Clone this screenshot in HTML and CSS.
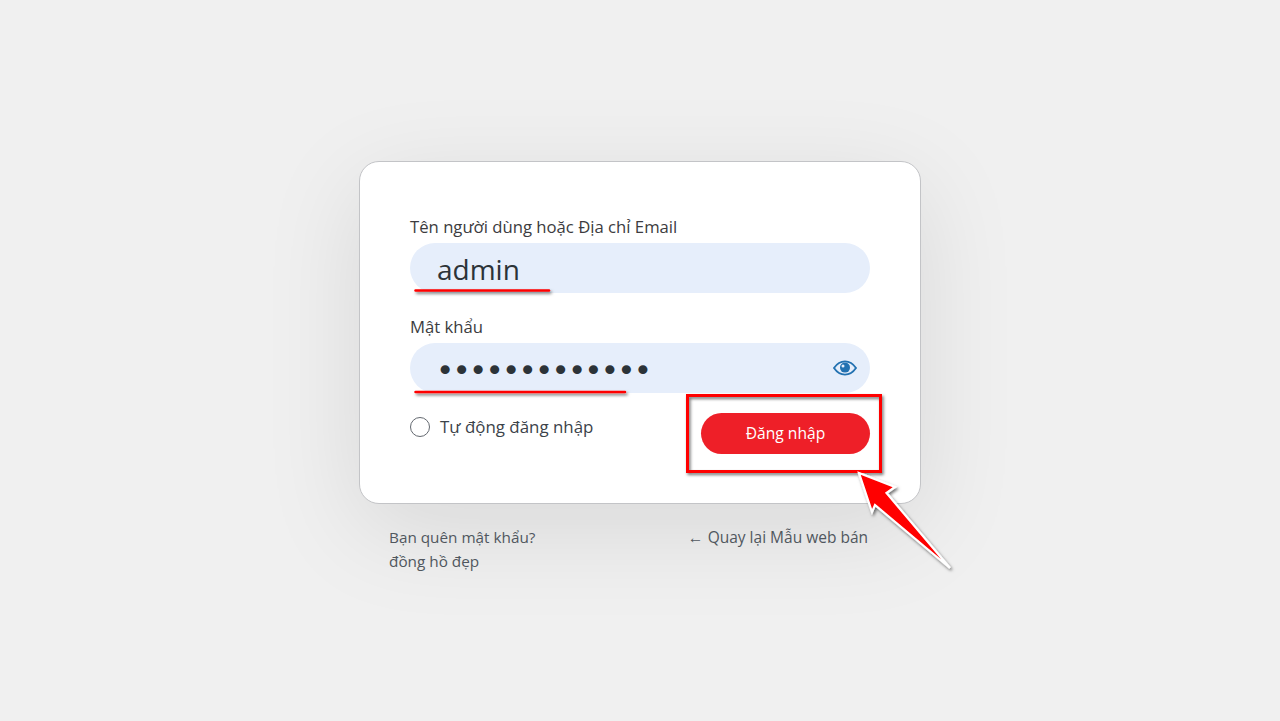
FILE: index.html
```html
<!DOCTYPE html>
<html lang="vi">
<head>
  <meta charset="UTF-8">
  <title>Đăng nhập</title>
  <link rel="stylesheet" href="styles.css">
</head>
<body>
<div class="login">
  <form class="login-form">
    <label class="field-label">Tên người dùng hoặc Địa chỉ Email</label>
    <div class="input">admin</div>

    <label class="field-label field-label-pass">Mật khẩu</label>
    <div class="input input-pass">
      <span class="dots">•••••••••••••</span>
      <svg class="eye" viewBox="0 0 24 16" width="24" height="16">
        <path d="M1 8C4 3.6 7.6 1.4 12 1.4S20 3.6 23 8c-3 4.400-6.600 6.600-11 6.600S4 12.400 1 8z" fill="none" stroke="#2271b1" stroke-width="1.800"/>
        <circle cx="12" cy="7.600" r="5" fill="#2271b1"/>
        <circle cx="10" cy="6" r="1.500" fill="#e6eefb"/>
      </svg>
    </div>

    <div class="form-bottom">
      <label class="remember"><span class="radio"></span><span class="remember-text">Tự động đăng nhập</span></label>
      <a class="button">Đăng nhập</a>
    </div>
  </form>

  <div class="links">
    <div class="links-left">
      <a>Bạn quên mật khẩu?</a>
      <a>đồng hồ đẹp</a>
    </div>
    <a class="back-link"><span class="back-arrow">←</span>Quay lại Mẫu web bán</a>
  </div>
</div>

<!-- red marks drawn over the screenshot -->
<svg class="marks" viewBox="0 0 1280 721" width="1280" height="721">
  <defs>
    <filter id="shadow" x="-20%" y="-20%" width="140%" height="140%">
      <feDropShadow dx="1.500" dy="2" stdDeviation="1.500" flood-color="#000" flood-opacity="0.550"/>
    </filter>
  </defs>
  <g filter="url(#shadow)">
    <path d="M415.500 290.500H549" stroke="#f00" stroke-width="2.500" stroke-linecap="round" fill="none"/>
    <path d="M415.500 392H625" stroke="#f00" stroke-width="2.500" stroke-linecap="round" fill="none"/>
    <rect x="687.500" y="395.500" width="193" height="76" fill="none" stroke="#f00" stroke-width="3"/>
    <path d="M859 473L895 487L886.500 493L950 568L875 505L872 512Z" fill="#f00" stroke="#fff" stroke-width="2.200" stroke-linejoin="miter"/>
  </g>
</svg>
</body>
</html>
```

FILE: styles.css
```css
html, body {
  margin: 0;
  padding: 0;
}
body {
  position: relative;
  height: 721px;
  overflow: hidden;
  background: #f0f0f0;
  color: #2c3338;
  font-family: "Open Sans", "Noto Sans", sans-serif;
  font-size: 16px;
}

.login {
  width: 562px;
  margin: 0 auto;
  padding-top: 161px;
}
.login-form {
  box-sizing: border-box;
  height: 343px;
  padding: 54px 50px 0;
  background: #fff;
  border: 1px solid #c3c4c7;
  border-radius: 20px;
  box-shadow: 0 25px 100px rgba(0, 0, 0, 0.1);
}

.field-label {
  display: block;
  height: 27px;
  line-height: 22px;
  font-size: 16.700px;
  color: #3c3c40;
}
.field-label-pass {
  margin-top: 23px;
}
.input {
  box-sizing: border-box;
  height: 50px;
  padding: 0 27px;
  line-height: 52px;
  font-size: 28px;
  background: #e6eefb;
  border-radius: 25px;
}
.input-pass {
  display: flex;
  align-items: center;
  justify-content: space-between;
  padding: 0 13px 0 26px;
}
.dots {
  padding-top: 3px;
  font-family: "DejaVu Sans", sans-serif;
  font-size: 31px;
  letter-spacing: -1.800px;
  line-height: 50px;
}
.eye {
  display: block;
}

.form-bottom {
  display: flex;
  justify-content: space-between;
  align-items: flex-start;
  margin-top: 20px;
}
.remember {
  display: flex;
  align-items: center;
  height: 28px;
  font-size: 16.900px;
  color: #3c434a;
}
.remember-text {
  margin-bottom: 2px;
}
.radio {
  box-sizing: border-box;
  width: 20px;
  height: 20px;
  margin-right: 10px;
  border: 1.500px solid #646970;
  border-radius: 50%;
  background: #fff;
}
.button {
  display: block;
  width: 169px;
  height: 41px;
  line-height: 41px;
  text-align: center;
  font-size: 15.600px;
  color: #fff;
  background: #ee1f28;
  border-radius: 21px;
}

.links {
  display: flex;
  justify-content: space-between;
  padding: 21px 53px 0 30px;
  line-height: 24px;
  font-size: 15.300px;
  color: #50575e;
}
.links-left a {
  display: block;
}
.back-link {
  font-size: 15.500px;
}
.back-arrow {
  display: inline-block;
  width: 20px;
}

.marks {
  position: absolute;
  left: 0;
  top: 0;
  pointer-events: none;
}
```
